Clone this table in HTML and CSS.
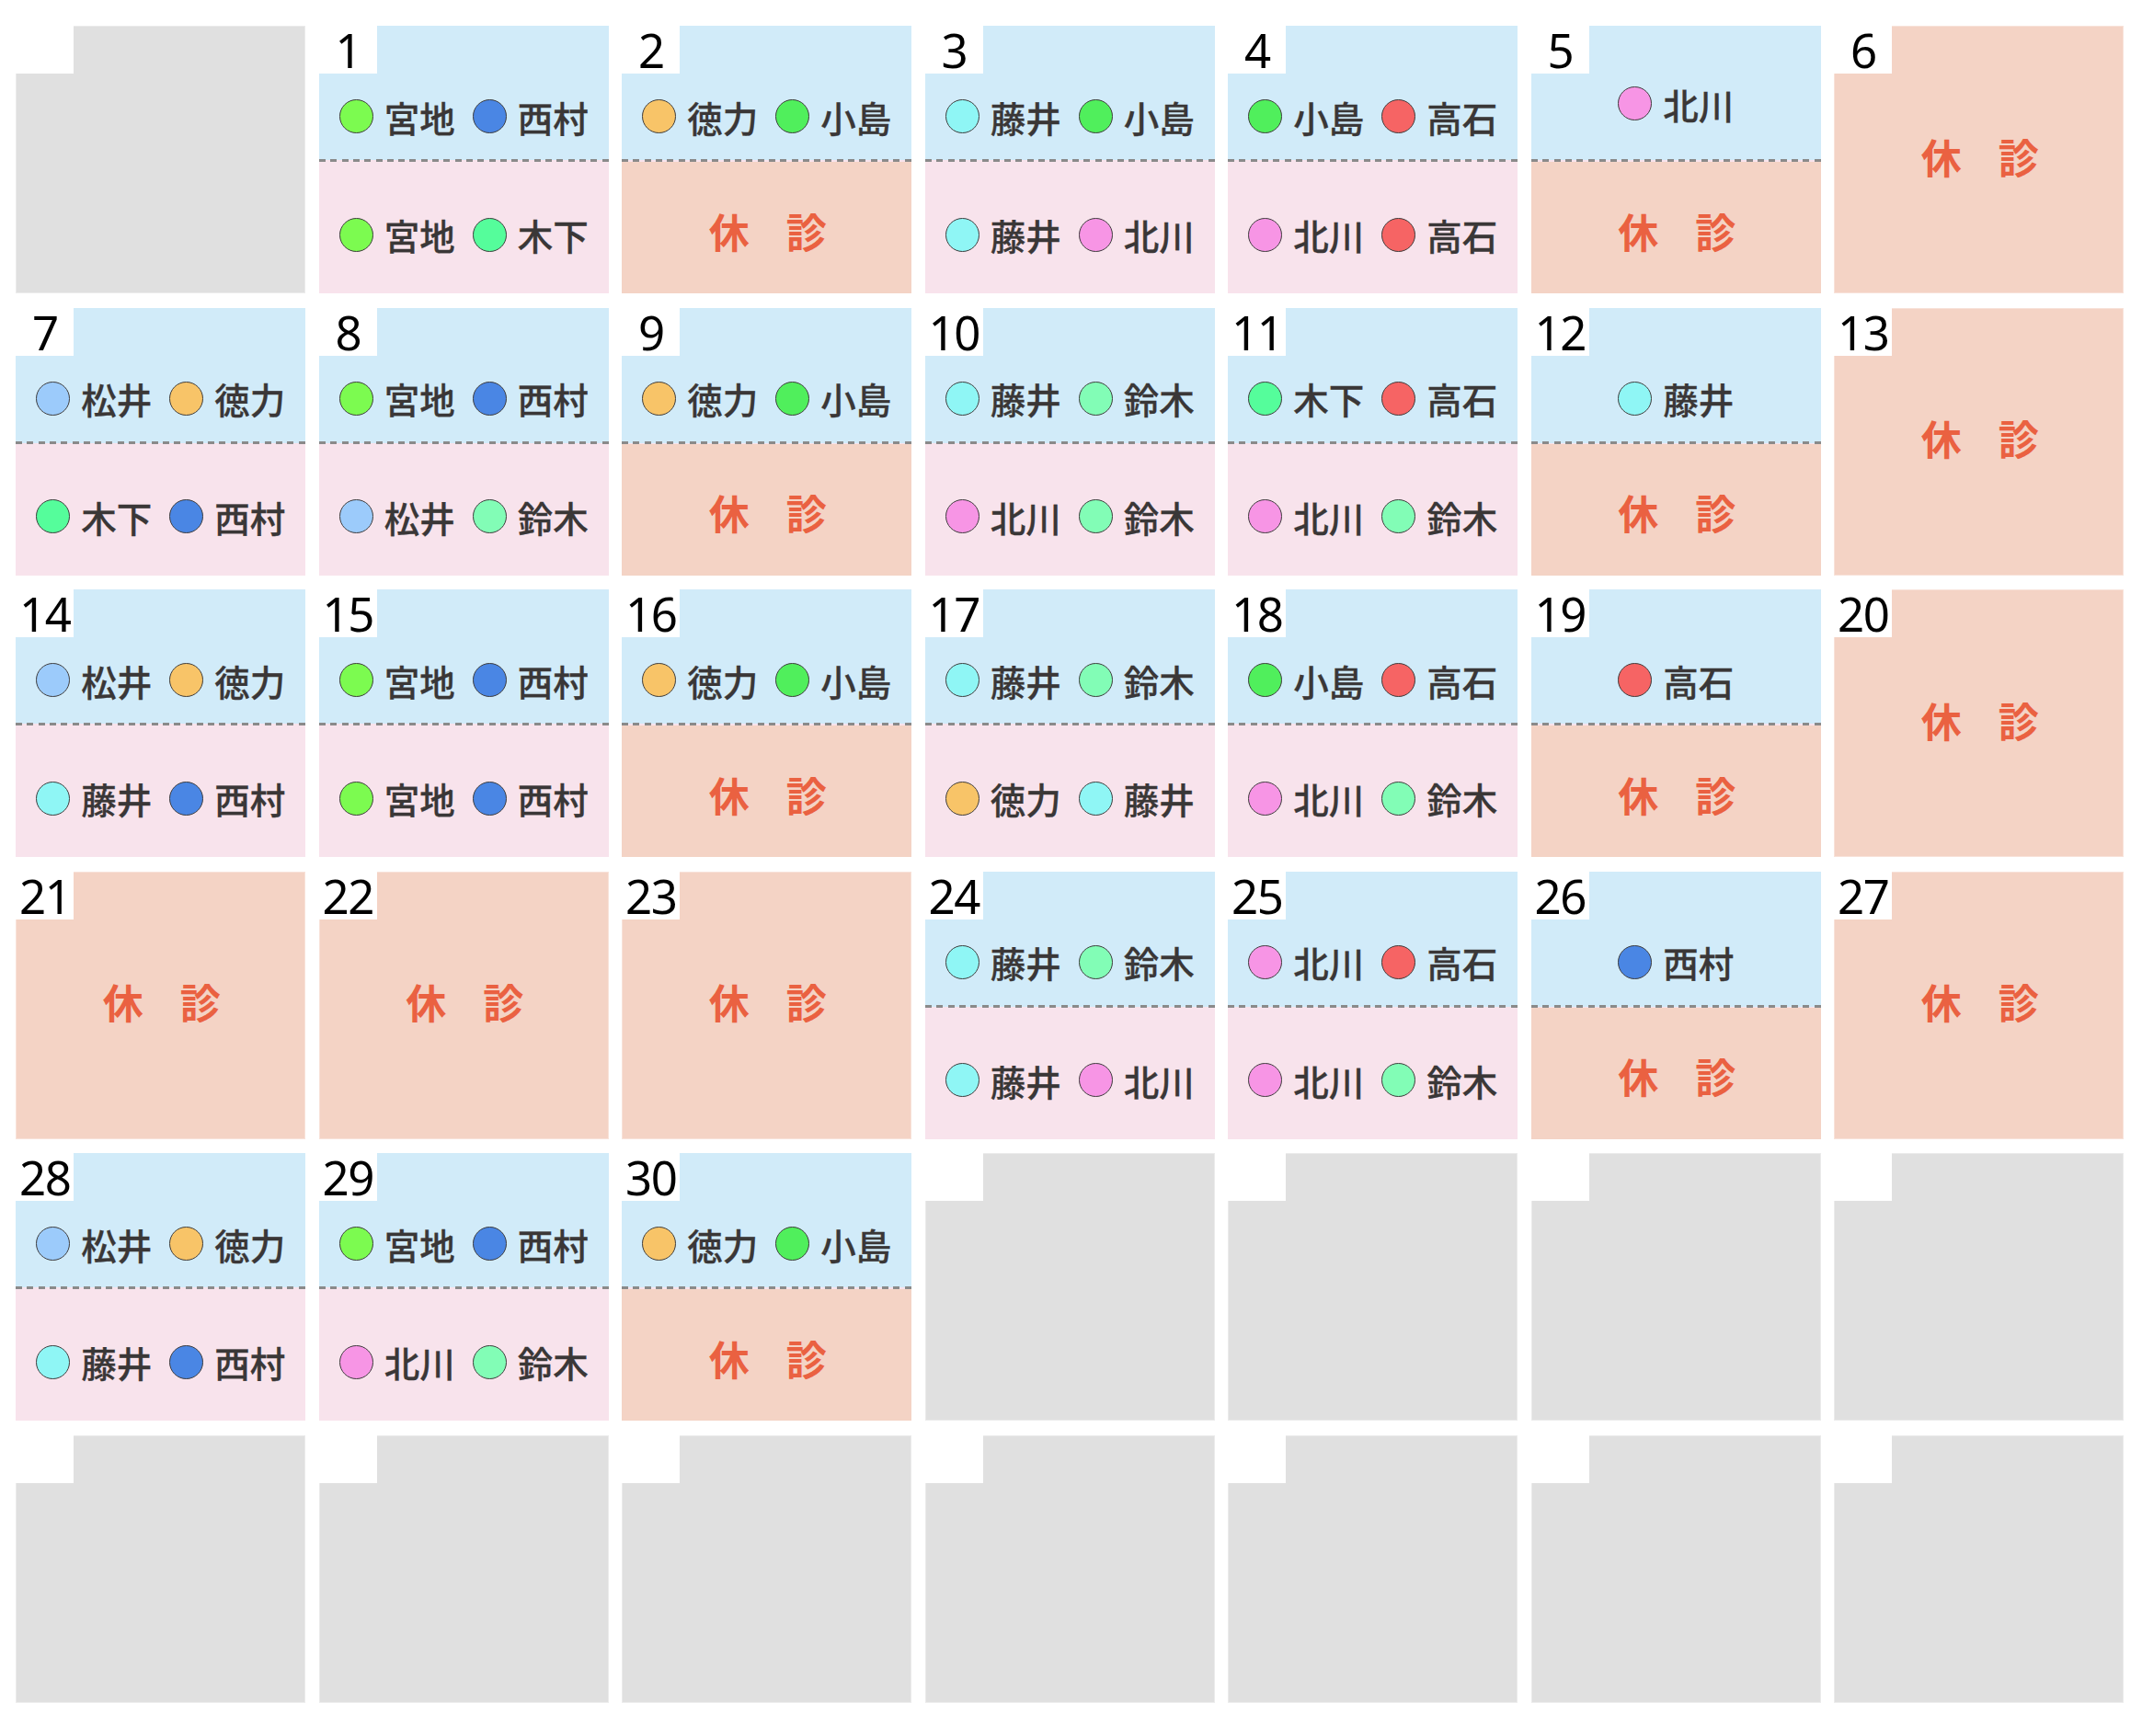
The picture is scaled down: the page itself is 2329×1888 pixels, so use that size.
FILE: index.html
```html
<!DOCTYPE html>
<html lang="ja">
<head>
<meta charset="utf-8">
<title>診療カレンダー</title>
<link rel="stylesheet" href="styles.css">
</head>
<body>
<div class="calendar">
  <!-- row 1 -->
  <div class="cell empty"><div class="date"></div></div>
  <div class="cell">
    <div class="am"><div class="date">1</div><div class="names"><span class="nm"><i class="dot miyaji"></i>宮地</span><span class="nm"><i class="dot nishimura"></i>西村</span></div></div>
    <div class="sep"></div>
    <div class="pm"><span class="nm"><i class="dot miyaji"></i>宮地</span><span class="nm"><i class="dot kinoshita"></i>木下</span></div>
  </div>
  <div class="cell">
    <div class="am"><div class="date">2</div><div class="names"><span class="nm"><i class="dot tokuriki"></i>徳力</span><span class="nm"><i class="dot kojima"></i>小島</span></div></div>
    <div class="sep"></div>
    <div class="pm off"><span class="closed">休　診</span></div>
  </div>
  <div class="cell">
    <div class="am"><div class="date">3</div><div class="names"><span class="nm"><i class="dot fujii"></i>藤井</span><span class="nm"><i class="dot kojima"></i>小島</span></div></div>
    <div class="sep"></div>
    <div class="pm"><span class="nm"><i class="dot fujii"></i>藤井</span><span class="nm"><i class="dot kitagawa"></i>北川</span></div>
  </div>
  <div class="cell">
    <div class="am"><div class="date">4</div><div class="names"><span class="nm"><i class="dot kojima"></i>小島</span><span class="nm"><i class="dot takaishi"></i>高石</span></div></div>
    <div class="sep"></div>
    <div class="pm"><span class="nm"><i class="dot kitagawa"></i>北川</span><span class="nm"><i class="dot takaishi"></i>高石</span></div>
  </div>
  <div class="cell">
    <div class="am"><div class="date">5</div><div class="names raised"><span class="nm"><i class="dot kitagawa"></i>北川</span></div></div>
    <div class="sep"></div>
    <div class="pm off"><span class="closed">休　診</span></div>
  </div>
  <div class="cell holiday"><div class="date">6</div><span class="closed">休　診</span></div>

  <!-- row 2 -->
  <div class="cell">
    <div class="am"><div class="date">7</div><div class="names"><span class="nm"><i class="dot matsui"></i>松井</span><span class="nm"><i class="dot tokuriki"></i>徳力</span></div></div>
    <div class="sep"></div>
    <div class="pm"><span class="nm"><i class="dot kinoshita"></i>木下</span><span class="nm"><i class="dot nishimura"></i>西村</span></div>
  </div>
  <div class="cell">
    <div class="am"><div class="date">8</div><div class="names"><span class="nm"><i class="dot miyaji"></i>宮地</span><span class="nm"><i class="dot nishimura"></i>西村</span></div></div>
    <div class="sep"></div>
    <div class="pm"><span class="nm"><i class="dot matsui"></i>松井</span><span class="nm"><i class="dot suzuki"></i>鈴木</span></div>
  </div>
  <div class="cell">
    <div class="am"><div class="date">9</div><div class="names"><span class="nm"><i class="dot tokuriki"></i>徳力</span><span class="nm"><i class="dot kojima"></i>小島</span></div></div>
    <div class="sep"></div>
    <div class="pm off"><span class="closed">休　診</span></div>
  </div>
  <div class="cell">
    <div class="am"><div class="date">10</div><div class="names"><span class="nm"><i class="dot fujii"></i>藤井</span><span class="nm"><i class="dot suzuki"></i>鈴木</span></div></div>
    <div class="sep"></div>
    <div class="pm"><span class="nm"><i class="dot kitagawa"></i>北川</span><span class="nm"><i class="dot suzuki"></i>鈴木</span></div>
  </div>
  <div class="cell">
    <div class="am"><div class="date">11</div><div class="names"><span class="nm"><i class="dot kinoshita"></i>木下</span><span class="nm"><i class="dot takaishi"></i>高石</span></div></div>
    <div class="sep"></div>
    <div class="pm"><span class="nm"><i class="dot kitagawa"></i>北川</span><span class="nm"><i class="dot suzuki"></i>鈴木</span></div>
  </div>
  <div class="cell">
    <div class="am"><div class="date">12</div><div class="names"><span class="nm"><i class="dot fujii"></i>藤井</span></div></div>
    <div class="sep"></div>
    <div class="pm off"><span class="closed">休　診</span></div>
  </div>
  <div class="cell holiday"><div class="date">13</div><span class="closed">休　診</span></div>

  <!-- row 3 -->
  <div class="cell">
    <div class="am"><div class="date">14</div><div class="names"><span class="nm"><i class="dot matsui"></i>松井</span><span class="nm"><i class="dot tokuriki"></i>徳力</span></div></div>
    <div class="sep"></div>
    <div class="pm"><span class="nm"><i class="dot fujii"></i>藤井</span><span class="nm"><i class="dot nishimura"></i>西村</span></div>
  </div>
  <div class="cell">
    <div class="am"><div class="date">15</div><div class="names"><span class="nm"><i class="dot miyaji"></i>宮地</span><span class="nm"><i class="dot nishimura"></i>西村</span></div></div>
    <div class="sep"></div>
    <div class="pm"><span class="nm"><i class="dot miyaji"></i>宮地</span><span class="nm"><i class="dot nishimura"></i>西村</span></div>
  </div>
  <div class="cell">
    <div class="am"><div class="date">16</div><div class="names"><span class="nm"><i class="dot tokuriki"></i>徳力</span><span class="nm"><i class="dot kojima"></i>小島</span></div></div>
    <div class="sep"></div>
    <div class="pm off"><span class="closed">休　診</span></div>
  </div>
  <div class="cell">
    <div class="am"><div class="date">17</div><div class="names"><span class="nm"><i class="dot fujii"></i>藤井</span><span class="nm"><i class="dot suzuki"></i>鈴木</span></div></div>
    <div class="sep"></div>
    <div class="pm"><span class="nm"><i class="dot tokuriki"></i>徳力</span><span class="nm"><i class="dot fujii"></i>藤井</span></div>
  </div>
  <div class="cell">
    <div class="am"><div class="date">18</div><div class="names"><span class="nm"><i class="dot kojima"></i>小島</span><span class="nm"><i class="dot takaishi"></i>高石</span></div></div>
    <div class="sep"></div>
    <div class="pm"><span class="nm"><i class="dot kitagawa"></i>北川</span><span class="nm"><i class="dot suzuki"></i>鈴木</span></div>
  </div>
  <div class="cell">
    <div class="am"><div class="date">19</div><div class="names"><span class="nm"><i class="dot takaishi"></i>高石</span></div></div>
    <div class="sep"></div>
    <div class="pm off"><span class="closed">休　診</span></div>
  </div>
  <div class="cell holiday"><div class="date">20</div><span class="closed">休　診</span></div>

  <!-- row 4 -->
  <div class="cell holiday"><div class="date">21</div><span class="closed">休　診</span></div>
  <div class="cell holiday"><div class="date">22</div><span class="closed">休　診</span></div>
  <div class="cell holiday"><div class="date">23</div><span class="closed">休　診</span></div>
  <div class="cell">
    <div class="am"><div class="date">24</div><div class="names"><span class="nm"><i class="dot fujii"></i>藤井</span><span class="nm"><i class="dot suzuki"></i>鈴木</span></div></div>
    <div class="sep"></div>
    <div class="pm"><span class="nm"><i class="dot fujii"></i>藤井</span><span class="nm"><i class="dot kitagawa"></i>北川</span></div>
  </div>
  <div class="cell">
    <div class="am"><div class="date">25</div><div class="names"><span class="nm"><i class="dot kitagawa"></i>北川</span><span class="nm"><i class="dot takaishi"></i>高石</span></div></div>
    <div class="sep"></div>
    <div class="pm"><span class="nm"><i class="dot kitagawa"></i>北川</span><span class="nm"><i class="dot suzuki"></i>鈴木</span></div>
  </div>
  <div class="cell">
    <div class="am"><div class="date">26</div><div class="names"><span class="nm"><i class="dot nishimura"></i>西村</span></div></div>
    <div class="sep"></div>
    <div class="pm off"><span class="closed">休　診</span></div>
  </div>
  <div class="cell holiday"><div class="date">27</div><span class="closed">休　診</span></div>

  <!-- row 5 -->
  <div class="cell">
    <div class="am"><div class="date">28</div><div class="names"><span class="nm"><i class="dot matsui"></i>松井</span><span class="nm"><i class="dot tokuriki"></i>徳力</span></div></div>
    <div class="sep"></div>
    <div class="pm"><span class="nm"><i class="dot fujii"></i>藤井</span><span class="nm"><i class="dot nishimura"></i>西村</span></div>
  </div>
  <div class="cell">
    <div class="am"><div class="date">29</div><div class="names"><span class="nm"><i class="dot miyaji"></i>宮地</span><span class="nm"><i class="dot nishimura"></i>西村</span></div></div>
    <div class="sep"></div>
    <div class="pm"><span class="nm"><i class="dot kitagawa"></i>北川</span><span class="nm"><i class="dot suzuki"></i>鈴木</span></div>
  </div>
  <div class="cell">
    <div class="am"><div class="date">30</div><div class="names"><span class="nm"><i class="dot tokuriki"></i>徳力</span><span class="nm"><i class="dot kojima"></i>小島</span></div></div>
    <div class="sep"></div>
    <div class="pm off"><span class="closed">休　診</span></div>
  </div>
  <div class="cell empty"><div class="date"></div></div>
  <div class="cell empty"><div class="date"></div></div>
  <div class="cell empty"><div class="date"></div></div>
  <div class="cell empty"><div class="date"></div></div>

  <!-- row 6 -->
  <div class="cell empty"><div class="date"></div></div>
  <div class="cell empty"><div class="date"></div></div>
  <div class="cell empty"><div class="date"></div></div>
  <div class="cell empty"><div class="date"></div></div>
  <div class="cell empty"><div class="date"></div></div>
  <div class="cell empty"><div class="date"></div></div>
  <div class="cell empty"><div class="date"></div></div>
</div>
</body>
</html>
```
FILE: styles.css
```css
html, body {
  margin: 0;
  padding: 0;
  background: #ffffff;
}

.calendar {
  display: grid;
  grid-template-columns: repeat(7, 315px);
  grid-auto-rows: 291px;
  column-gap: 14.5px;
  row-gap: 15.6px;
  padding: 28px 0 0 17.3px;
}

.cell {
  display: flex;
  flex-direction: column;
  box-shadow: inset 0 0 0 1px rgba(255, 255, 255, 0.35);
}

.cell.empty {
  background: #e0e0e0;
}

.date {
  flex: none;
  width: 63px;
  height: 52px;
  background: #ffffff;
  color: #000000;
  text-align: center;
  font-family: "Noto Sans", "Open Sans", sans-serif;
  font-weight: 400;
  font-size: 51px;
  line-height: 52px;
  letter-spacing: -1.5px;
}

.am {
  flex: none;
  height: 145px;
  display: flex;
  flex-direction: column;
  background: #d1ebf9;
}

.names {
  flex: 1;
  display: flex;
  align-items: center;
  justify-content: center;
}

.names.raised {
  padding-bottom: 28px;
}

.sep {
  flex: none;
  height: 3px;
  background:
    repeating-linear-gradient(to right, #8a8a8a 0 7px, transparent 7px 12.3px),
    linear-gradient(#d1ebf9 0 50%, #f8e3ec 50% 100%);
}

.pm {
  flex: 1;
  display: flex;
  align-items: center;
  justify-content: center;
  padding-top: 15px;
  background: #f8e3ec;
}

.pm.off {
  background: #f4d3c5;
  padding-top: 6px;
}

.nm {
  display: flex;
  align-items: center;
  font-family: "Noto Sans CJK JP", "Noto Sans CJK SC", sans-serif;
  font-weight: 500;
  font-size: 38.5px;
  line-height: 42px;
  color: #3a3737;
  -webkit-text-stroke: 0.3px #3a3737;
}

.nm + .nm {
  margin-left: 19px;
}

.dot {
  flex: none;
  display: block;
  width: 37px;
  height: 37px;
  box-sizing: border-box;
  border-radius: 50%;
  border: 1.5px solid #3f3d3d;
  margin-right: 12px;
}

.miyaji { background: #7cfb50; }
.nishimura { background: #4a86e4; }
.kinoshita { background: #55fd9b; }
.tokuriki { background: #f8c468; }
.kojima { background: #50ef5c; }
.fujii { background: #8ff6f5; }
.kitagawa { background: #f795e5; }
.takaishi { background: #f66464; }
.matsui { background: #9ccbfb; }
.suzuki { background: #82fdb6; }

.closed {
  font-family: "Noto Sans CJK JP", "Noto Sans CJK SC", sans-serif;
  font-weight: 700;
  font-size: 44px;
  line-height: 48px;
  letter-spacing: -2px;
  color: #ea6141;
  white-space: nowrap;
}

.cell.holiday {
  display: grid;
  background: #f4d3c5;
}

.cell.holiday > .date,
.cell.holiday > .closed {
  grid-area: 1 / 1;
}

.cell.holiday > .date {
  align-self: start;
  justify-self: start;
}

.cell.holiday > .closed {
  align-self: center;
  justify-self: center;
  margin-bottom: 8px;
}
```
